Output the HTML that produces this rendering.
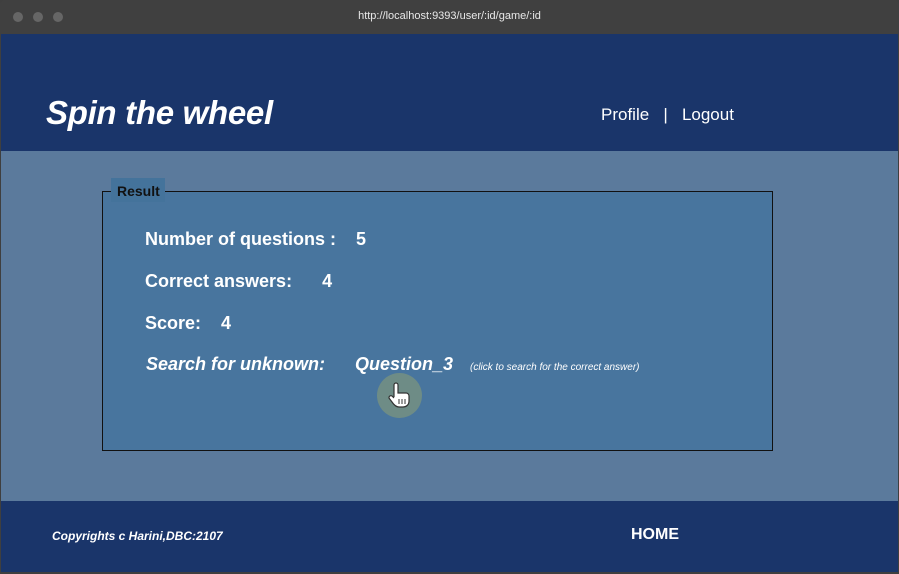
<!DOCTYPE html>
<html><head><style>
*{margin:0;padding:0;box-sizing:border-box}
body{width:899px;height:574px;background:#3f3f3f;font-family:"Liberation Sans",sans-serif;position:relative;overflow:hidden}
.top{position:absolute;left:0;top:0;width:899px;height:34px;background:#404040;border-radius:5px 5px 0 0}
.dot{position:absolute;top:12px;width:10px;height:10px;border-radius:50%;background:#666}
.url{position:absolute;top:10px;left:0;width:899px;text-align:center;color:#e8e8e8;font-size:11px}
.hdr{position:absolute;left:1px;top:34px;width:897px;height:117px;background:#1a356a}
.title{position:absolute;left:46px;top:94px;color:#fff;font-size:33px;font-style:italic;font-weight:bold;letter-spacing:-0.3px}
.nav{position:absolute;left:601px;top:105px;color:#fff;font-size:17px}
.main{position:absolute;left:1px;top:151px;width:897px;height:350px;background:#5b7a9c}
.box{position:absolute;left:102px;top:191px;width:671px;height:260px;background:#48759e;border:1px solid #111}
.leg{position:absolute;left:111px;top:178px;width:54px;height:24px;background:#44739b;color:#111;font-size:14px;font-weight:bold;padding:5px 0 0 6px}
.t{position:absolute;color:#fff;font-size:18px;font-weight:bold;white-space:pre}
.ft{position:absolute;left:1px;top:501px;width:897px;height:71px;background:#1a356a}
</style></head><body>
<div class="top"></div>
<div class="dot" style="left:13px"></div><div class="dot" style="left:33px"></div><div class="dot" style="left:53px"></div>
<div class="url">http://localhost:9393/user/:id/game/:id</div>
<div class="hdr"></div>
<div class="title">Spin the wheel</div>
<div class="nav">Profile &nbsp;&nbsp;| &nbsp;&nbsp;Logout</div>
<div class="main"></div>
<div class="box"></div>
<div class="leg">Result</div>
<div class="t" style="left:145px;top:229px">Number of questions :    5</div>
<div class="t" style="left:145px;top:271px">Correct answers:      4</div>
<div class="t" style="left:145px;top:313px">Score:    4</div>
<div class="t" style="left:146px;top:354px;font-style:italic">Search for unknown:</div>
<div class="t" style="left:355px;top:354px;font-style:italic">Question_3</div>
<div class="t" style="left:470px;top:362px;font-size:10px;font-weight:normal;font-style:italic">(click to search for the correct answer)</div>
<div style="position:absolute;left:377px;top:373px;width:45px;height:45px;border-radius:50%;background:#6e8c86"></div>
<svg style="position:absolute;left:386px;top:381px" width="26" height="28" viewBox="0 0 26 28"><path d="M8 16V4a2 2 0 0 1 4 0v8h8a3 3 0 0 1 3 3v5c0 4-3 6-6 6h-4c-3 0-5-2-7-5l-3-4a2 2 0 0 1 3-2l2 2" fill="#fff" stroke="#333" stroke-width="1.2"/><path d="M13 18v5M16 18v5M19 18v5" stroke="#333" stroke-width="1"/></svg>
<div class="ft"></div>
<div class="t" style="left:52px;top:529px;font-size:12px;font-style:italic">Copyrights c Harini,DBC:2107</div>
<div class="t" style="left:631px;top:526px;font-size:16px">HOME</div>
</body></html>
